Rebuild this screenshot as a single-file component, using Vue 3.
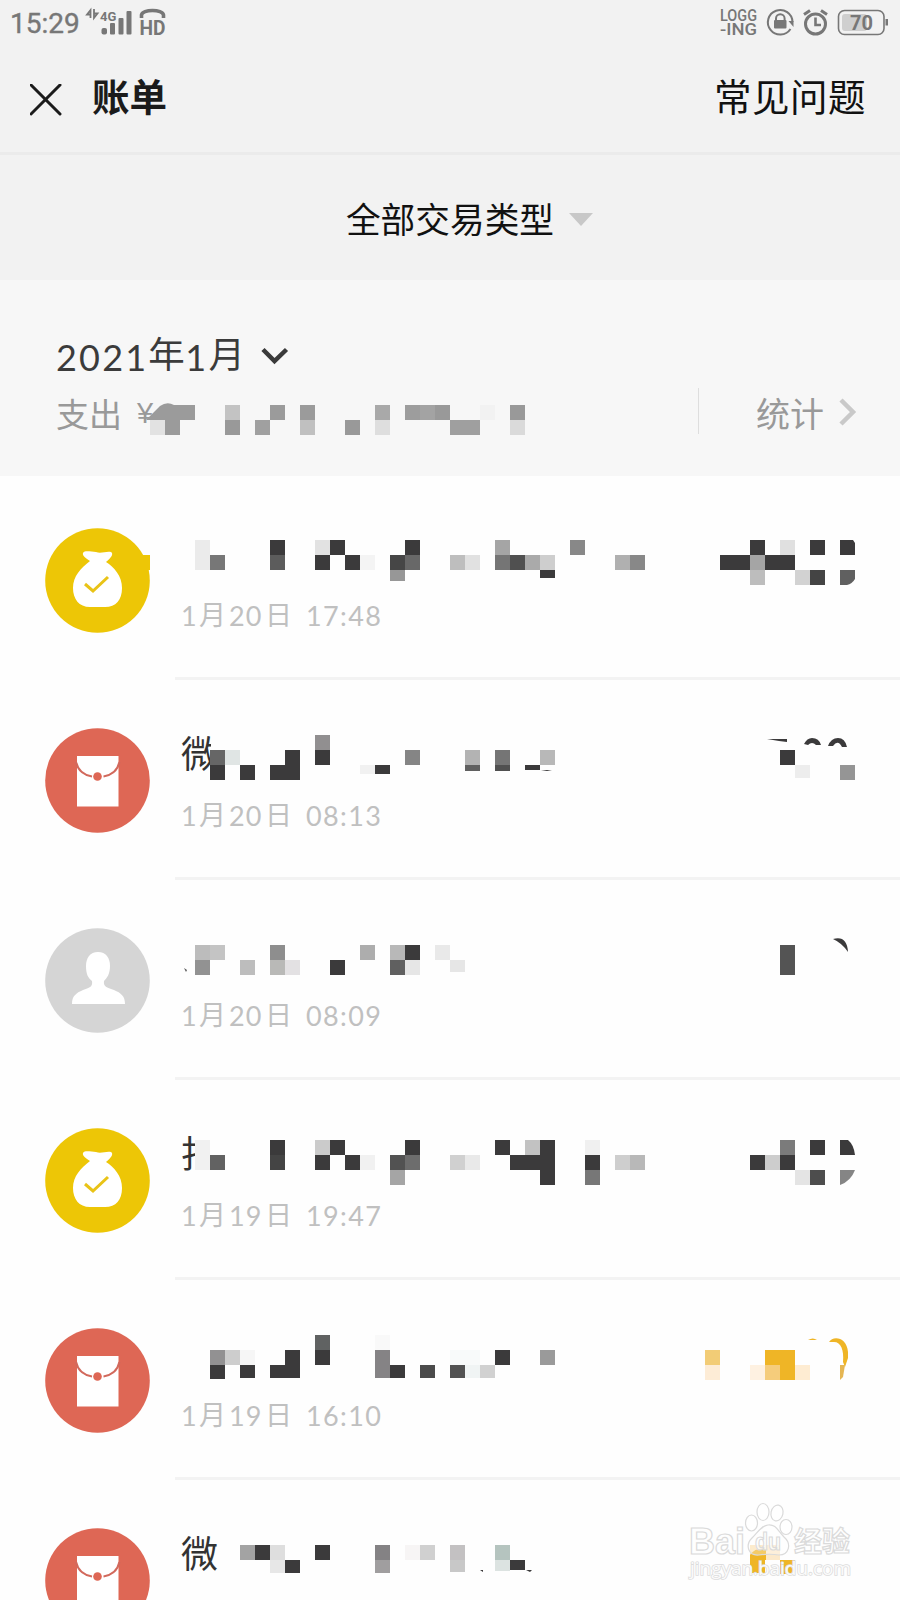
<template>
  <div class="page">
    <header class="status">
      <div class="status-left">
        <span class="clock">15:29</span>
        <svg width="86" height="44" viewBox="84 0 86 44">
          <g fill="none" stroke="#777" stroke-width="1.8">
            <path d="M90.500 18V10L87 14.500H90.500M94 9V18L97.500 13.500H94" />
            <path d="M141.500 18V15C142 9 163 9 163.500 15V18" stroke-width="3.600" />
          </g>
          <text x="100" y="20.500" class="net">4G</text>
          <g fill="#777">
            <rect x="101.500" y="28" width="5.500" height="6.500" rx="2" />
            <rect x="110" y="23" width="5" height="11.500" rx="1" />
            <rect x="118.500" y="18" width="5" height="16.500" rx="1" />
            <rect x="126.500" y="11" width="5" height="23.500" rx="1" />
          </g>
          <text x="139.500" y="35" class="hd" textLength="26" lengthAdjust="spacingAndGlyphs">HD</text>
        </svg>
      </div>
      <svg width="172" height="44" viewBox="718 0 172 44">
        <text x="720" y="21" class="log" textLength="37" lengthAdjust="spacingAndGlyphs">LOGG</text>
        <text x="720" y="34.500" class="log" textLength="37" lengthAdjust="spacingAndGlyphs">-ING</text>
        <g fill="none" stroke="#777" stroke-width="2">
          <path d="M790.500 29A12.300 12.300 0 1 1 792.500 22" />
          <path d="M776 21V18.500a4.300 4.300 0 0 1 8.600 0V21" />
        </g>
        <rect x="774" y="20" width="12.500" height="8.500" rx="1" fill="#777" />
        <path d="M788.500 21h5v6z" fill="#777" />
        <g fill="none" stroke="#777" stroke-width="3">
          <circle cx="815.500" cy="24" r="10" />
          <path d="M815.500 17.500V25H821" stroke-width="2.600" />
          <path d="M804 14.500L810 10.500M821 10.500L827 14.500" />
        </g>
        <rect x="838.500" y="10.500" width="45.500" height="24" rx="6" fill="none" stroke="#777" stroke-width="1.600" />
        <rect x="842" y="14" width="25" height="17" rx="3" fill="#cfcfcf" />
        <rect x="885.500" y="19" width="2.500" height="6.500" fill="#777" />
        <text x="850" y="30" class="battery" textLength="23">70</text>
      </svg>
    </header>

    <nav class="nav">
      <svg width="32" height="32" viewBox="0 0 32 32">
        <path d="M1 1L30 30M30 1L1 30" stroke="#1b1b1b" stroke-width="3" stroke-linecap="round" />
      </svg>
      <h1>账单</h1>
      <a class="faq">常见问题</a>
    </nav>

    <div class="filter">
      <span>全部交易类型</span>
      <i class="triangle"></i>
    </div>

    <section class="summary">
      <div class="month">
        <span class="num">2021</span><span class="cn">年</span><span class="num">1</span><span class="cn">月</span>
        <svg width="28" height="18" viewBox="0 0 28 18">
          <path d="M2 2.500L13.500 14L25.500 2.500" fill="none" stroke="#3a3a3a" stroke-width="4.500" />
        </svg>
      </div>
      <div class="spend">
        <span class="spend-label">支出</span><span class="yen">¥</span>
        <div class="stat">
          <span>统计</span>
          <svg width="18" height="30" viewBox="0 0 18 30">
            <path d="M2 3L14 15L2 27" fill="none" stroke="#c9c9c9" stroke-width="4.500" />
          </svg>
        </div>
      </div>
      <svg class="mosaic" width="900" height="196" viewBox="0 280 900 196" shape-rendering="crispEdges">
        <path d="M146 420L160 406Q167 401 174 405H180V420Z" fill="#9b9b9b" shape-rendering="auto" />
        <rect v-for="(b, i) in spendBlocks" :key="i" :x="b[0] * 15" :y="b[1] * 15" :width="(b[3] || 1) * 15" :height="b[4] || 15" :fill="b[2]" />
      </svg>
    </section>

    <main>
      <article v-for="(item, n) in items" :key="n" class="item">
        <svg class="icon" width="105" height="105" viewBox="0 0 105 105">
          <circle cx="52.500" cy="52.500" r="52.300" :fill="colors[item.type]" />
          <template v-if="item.type === 'bag'">
            <path d="M45 33C41 30 37 28 38 25C40 22 46 24 51 24C56 26 61 23 66 24C69 26 66 30 61 34C69 39 77 48 77 60C77 72 71 79 60 79H45C34 79 28 71 28 60C28 48 36 40 45 33Z" fill="#fff" />
            <path d="M40 56L48 63L63 49" fill="none" stroke="#e9c316" stroke-width="3" />
          </template>
          <template v-else-if="item.type === 'packet'">
            <path d="M32 28H73.500V78.500H32Z" fill="#fff" />
            <path d="M31 34C33 43 40 47.500 47 48.500M74.500 34C72.500 43 65.500 47.500 58.500 48.500" fill="none" stroke="#d2695c" stroke-width="2.200" />
            <circle cx="52.500" cy="48.500" r="4.300" fill="#de6755" />
          </template>
          <path v-else d="M53 24C61 24 65 30 65 38C65 46 62 50 59 53C58 59 63 60 69 62C76 65 80 68 80 76H27C27 68 31 65 38 62C44 60 48 59 47 53C43 50 41 46 41 38C41 30 45 24 53 24Z" fill="#fff" />
        </svg>
        <div class="body">
          <div class="name"><span :style="{ width: item.nameWidth + 'px' }">{{ item.name }}</span></div>
          <div v-if="item.time" class="time">
            <span class="num one">1</span><span class="cn">月</span><span class="num day">{{ item.day }}</span><span class="cn">日</span><span class="num clock-time">{{ item.time }}</span>
          </div>
        </div>
        <svg class="mosaic" width="900" height="200" :viewBox="`0 ${478 + n * 200} 900 200`">
          <g shape-rendering="crispEdges">
            <rect v-for="(b, i) in item.blocks" :key="i" :x="b[0] * 15" :y="b[1] * 15" :width="(b[3] || 1) * 15" :height="b[4] || 15" :fill="b[2]" />
          </g>
          <path v-for="(s, i) in item.shapes" :key="'s' + i" :d="s[0]" :fill="s[1]" />
        </svg>
      </article>
    </main>

    <svg class="watermark" width="170" height="90" viewBox="686 1500 170 90">
      <g fill="#fff" fill-opacity="0.7" stroke="#dadada" stroke-width="1.200">
        <text x="689" y="1554" class="wm-bai" textLength="56" lengthAdjust="spacingAndGlyphs">Bai</text>
        <ellipse cx="751.500" cy="1523" rx="6" ry="8" />
        <ellipse cx="763" cy="1512" rx="6" ry="8.500" />
        <ellipse cx="777" cy="1513" rx="6" ry="8" transform="rotate(12 777 1513)" />
        <ellipse cx="786" cy="1527" rx="6" ry="7.500" />
        <path d="M768 1525C776 1524 778 1531 784 1537C792 1544 789 1555 779 1555C773 1554 766 1554 759 1555C748 1556 745 1545 752 1538C758 1532 761 1526 768 1525Z" fill-opacity="0.3" />
        <text x="755" y="1550" class="wm-du" textLength="26" lengthAdjust="spacingAndGlyphs">du</text>
        <text x="794" y="1552" class="wm-cn">经验</text>
        <text x="690" y="1575" class="wm-url" textLength="161" lengthAdjust="spacingAndGlyphs">jingyan.baidu.com</text>
      </g>
    </svg>
  </div>
</template>

<script setup>
const colors = { bag: '#edc606', packet: '#de6755', person: '#d5d5d5' };
const D = '#3b3a3b';
const O = '#efb526';

// blocks: [column, row, colour, columns wide, height in px] on a 15px grid
const spendBlocks = [
  [12, 27, '#9b9b9b'], [10, 28, '#e2e2e2'], [11, 28, '#9b9b9b'],
  [15, 27, '#c3c3c3'], [15, 28, '#999'], [17, 28, '#a0a0a0'], [18, 27, '#9b9b9b'],
  [20, 27, '#9b9b9b'], [20, 28, '#c0c0c0'], [23, 28, '#999'], [25, 27, '#a9a9a9'], [25, 28, '#dedede'],
  [27, 27, '#9d9d9d'], [28, 27, '#a3a3a3'], [29, 27, '#999'], [30, 28, '#9f9f9f', 2],
  [32, 27, '#f2f2f2'], [34, 27, '#999'], [34, 28, '#dadada'],
];

const items = [
  {
    type: 'bag', name: '', nameWidth: 0, day: '20', time: '17:48',
    blocks: [
      [9, 37, '#edc606'],
      [13, 36, '#ebebeb', 1, 30], [14, 37, '#777'], [18, 36, D], [18, 37, '#5c5c5c'],
      [21, 36, '#e2e2e2'], [22, 36, D], [21, 37, D], [23, 37, D], [24, 37, '#f4f4f4'],
      [26, 37, '#464646'], [26, 38, '#979797', 1, 11], [27, 36, D], [27, 37, '#686868'],
      [30, 37, '#bebebe'], [31, 37, '#e1e1e1'], [33, 36, '#a5a5a5'], [33, 37, '#757575'],
      [34, 37, '#505050'], [35, 37, '#aaa'], [36, 37, '#cecece'], [36, 38, D, 1, 8],
      [38, 36, '#888'], [41, 37, '#b0b0b0'], [42, 37, '#888'],
      [48, 37, D, 2], [50, 36, D], [50, 37, '#a5a5a5'], [50, 38, '#bdbdbd'], [51, 37, D, 2],
      [52, 36, '#e0e0e0'], [53, 38, '#d2d2d2'], [54, 36, D], [54, 38, '#444'],
    ],
    shapes: [
      ['M840 540H853L855 543V555H840Z', D],
      ['M840 570H855V579Q852 584 847 585H840Z', '#606060'],
    ],
  },
  {
    type: 'packet', name: '微', nameWidth: 30, day: '20', time: '08:13',
    blocks: [
      [14, 50, '#666'], [14, 51, D], [15, 50, '#e0e5e4'], [16, 51, D], [18, 51, D, 2], [19, 50, D],
      [21, 49, '#918f90'], [21, 50, D], [24, 51, '#f1f1f1', 1, 9], [25, 51, D, 1, 9],
      [27, 50, '#858585'], [31, 50, '#b3b3b3'], [31, 51, '#606060', 1, 6],
      [33, 50, '#757575'], [33, 51, '#505050', 1, 6], [35, 51, D, 1, 5], [36, 50, '#b8b8b8'],
      [52, 50, D], [53, 51, '#ededed', 1, 13], [56, 51, '#959595'],
    ],
    shapes: [
      ['M767 739L787 739V742L779 741Z', D],
      ['M804 744Q807 738 812 738Q819 738 821 745L816 745Q812 741 808 745Z', D],
      ['M828 746Q831 738 838 738Q845 738 847 747L842 747Q838 739 833 746Z', D],
      ['M541 770L552 770L547 771Z', D],
    ],
  },
  {
    type: 'person', name: '', nameWidth: 0, day: '20', time: '08:09',
    blocks: [
      [13, 63, '#bcbcbc'], [14, 63, '#c4c4c4'], [13, 64, '#929292'], [16, 64, '#bdbdbd'],
      [18, 63, '#8e8e8e'], [18, 64, '#b9b9b7'], [19, 64, '#e3e1e3'], [22, 64, D],
      [24, 63, '#adadad'], [26, 63, '#b8b8b8'], [27, 63, D], [26, 64, '#606060'], [27, 64, '#e6e6e6'],
      [29, 63, '#e9e9e9'], [30, 64, '#e6e6e6', 1, 12], [52, 63, '#545454', 1, 30],
    ],
    shapes: [
      ['M184 968L187 970L186 972Z', '#555'],
      ['M833 939Q847 935 848 952Q842 943 833 939Z', D],
    ],
  },
  {
    type: 'bag', name: '扫', nameWidth: 14, day: '19', time: '19:47',
    blocks: [
      [13, 76, '#f1f1f1', 1, 30], [14, 77, '#626262'], [18, 76, D], [18, 77, '#444'],
      [21, 76, '#cbcbcb'], [22, 76, D], [21, 77, D], [23, 77, D], [24, 77, '#f1f1f1'],
      [26, 77, '#525252'], [26, 78, '#a5a5a5'], [27, 76, D], [27, 77, '#6d6d6d'],
      [30, 77, '#d0d0d0'], [31, 77, '#e9e9e9'], [33, 76, D], [35, 76, '#c2c2c2'], [34, 77, D, 2],
      [36, 76, D, 1, 45], [39, 76, '#f0f0f0'], [39, 77, D], [39, 78, '#777'],
      [41, 77, '#cecece'], [42, 77, '#b8b8b8'],
      [50, 77, D], [51, 77, '#cdcdcd'], [52, 76, '#7b7b7b'], [52, 77, D],
      [53, 78, '#e4e4e4'], [54, 76, D], [54, 78, '#4d4d4d'],
    ],
    shapes: [
      ['M840 1140H848Q854 1145 855 1155H840Z', D],
      ['M840 1170H855Q851 1181 840 1185Z', '#858585'],
    ],
  },
  {
    type: 'packet', name: '', nameWidth: 0, day: '19', time: '16:10',
    blocks: [
      [14, 90, '#929192'], [15, 90, '#cdcdcd'], [16, 90, '#f6f6f6'], [14, 91, D, 1, 14], [16, 91, D, 1, 13],
      [18, 91, D, 2, 13], [19, 90, D], [21, 89, '#606262'], [21, 90, D],
      [25, 89, '#f9f9f9'], [25, 90, '#858385', 1, 28], [26, 91, D, 1, 13], [28, 91, '#4b4b4b', 1, 13],
      [30, 90, '#f8fafa', 2], [30, 91, '#525252', 1, 13], [31, 91, '#f0f4f4', 1, 13], [32, 91, '#d1d1d1', 1, 13],
      [33, 90, D], [36, 90, '#9a9a9a'],
      [47, 90, '#f2cc76'], [47, 91, '#fdecd6'], [50, 91, '#fef1e1'], [51, 90, O, 2],
      [51, 91, '#f5cc7b'], [52, 91, O], [53, 91, '#feecd2'],
    ],
    shapes: [
      ['M808 1340Q813 1337 817 1340Z', O],
      ['M829 1342C833 1335 847 1337 848 1352V1358L845 1367L843 1362C844 1350 841 1342 834 1342Z', O],
      ['M840 1365H845L843 1377L840 1380Z', '#e5b653'],
    ],
  },
  {
    type: 'packet', name: '微', nameWidth: 38, day: '19', time: '',
    blocks: [
      [16, 103, '#a3a3a3'], [17, 103, D], [18, 103, '#dedede'], [18, 104, '#e7e7e7', 1, 13], [19, 104, D, 1, 13],
      [21, 103, D], [25, 103, '#848284'], [25, 104, '#a09e9f', 1, 13], [27, 103, '#f7f5f5'], [28, 103, '#d0d0d0'],
      [30, 103, '#c3c1c2'], [30, 104, '#c8c8c8', 1, 12], [33, 103, '#b5c4bf'], [33, 104, '#dce3e1', 1, 11], [34, 104, D, 1, 10],
      [50, 103, '#fbe3b6'], [50, 104, O, 1, 13], [51, 103, '#fce9cb'], [52, 104, O, 1, 14],
    ],
    shapes: [
      ['M480 1570H483V1572Z', D],
      ['M526 1570H532L530 1572Z', D],
      ['M750 1555Q756 1547 766 1549V1560H750Z', O],
    ],
  },
];
</script>

<style>
body {
  margin: 0;
  background: #fefefe;
}
</style>

<style scoped>
.page {
  position: relative;
  width: 900px;
  height: 1600px;
  overflow: hidden;
  background: #fefefe;
  font-family: "Liberation Sans", "Noto Sans CJK SC", sans-serif;
}
svg {
  display: block;
  flex: none;
}
.status {
  height: 44px;
  display: flex;
  justify-content: space-between;
  padding: 0 10px;
  background: #f2f2f2;
}
.status-left {
  display: flex;
  gap: 3px;
}
.clock {
  width: 71px;
  font: 28px/48px Roboto, sans-serif;
  -webkit-text-stroke: 0.4px #777;
  color: #777;
}
.net,
.hd,
.log,
.battery {
  font-family: Roboto, sans-serif;
  font-weight: 700;
  fill: #777;
}
.net {
  font-size: 13px;
}
.hd {
  font-size: 21px;
}
.log {
  font-size: 16.500px;
  font-weight: 500;
}
.battery {
  font-size: 20px;
}
.nav {
  box-sizing: border-box;
  height: 111px;
  display: flex;
  align-items: center;
  padding: 3px 34px 0 30px;
  background: #f2f2f2;
  border-bottom: 3px solid #ebebeb;
}
.nav h1 {
  margin: 0 0 3px 30px;
  font-size: 37.500px;
  line-height: 50px;
  font-weight: 700;
  color: #1b1b1b;
}
.faq {
  margin: 0 0 3px auto;
  font-size: 37.500px;
  line-height: 50px;
  letter-spacing: 0.5px;
  color: #111;
}
.filter {
  height: 125px;
  display: flex;
  align-items: center;
  justify-content: center;
  gap: 15px;
  padding-left: 39px;
  box-sizing: border-box;
  background: #f2f2f2;
  font-size: 34.700px;
  color: #111;
}
.triangle {
  margin-top: 3px;
  border: 12px solid transparent;
  border-top: 13px solid #c8c8c8;
  border-bottom: 0;
}
.summary {
  position: relative;
  height: 196px;
  box-sizing: border-box;
  padding: 50px 43px 0 56px;
  background: #f7f7f7;
}
.num {
  font-family: Lato, sans-serif;
}
.month {
  height: 52px;
  display: flex;
  align-items: center;
  color: #3b3b3b;
  font-size: 36px;
}
.month .num {
  padding-top: 2px;
  letter-spacing: 2.200px;
}
.month .cn {
  width: 37px;
  font-size: 36.500px;
  line-height: 50px;
}
.month svg {
  margin-left: 16px;
}
.spend {
  height: 48px;
  margin-top: 7px;
  display: flex;
  align-items: center;
  color: #999;
  font-size: 33px;
}
.spend-label {
  width: 81px;
}
.yen {
  font-size: 29px;
}
.stat {
  height: 46px;
  margin: -4px 0 0 auto;
  display: flex;
  align-items: center;
  gap: 15px;
  padding-left: 57px;
  border-left: 1px solid #dedede;
  font-size: 34px;
}
.stat span,
.stat svg {
  margin-top: 2px;
}
.mosaic {
  position: absolute;
  left: 0;
  top: 0;
}
main {
  padding-top: 2px;
}
.item {
  position: relative;
  height: 200px;
  display: flex;
  padding-left: 45px;
}
.icon {
  margin-top: 50px;
}
.body {
  box-sizing: border-box;
  height: 202px;
  flex: 1;
  margin-left: 25px;
  padding: 56px 0 0 6px;
  border-bottom: 3px solid #f3f3f3;
}
.name {
  height: 61px;
  font-size: 37px;
  line-height: 44px;
  color: #333;
}
.name span {
  display: block;
  overflow: hidden;
  white-space: nowrap;
}
.time {
  display: flex;
  align-items: center;
  height: 40px;
  font-size: 27px;
  color: #c0c0c0;
}
.time .cn {
  width: 27px;
  font-size: 27px;
  margin-top: -3px;
}
.time .num {
  letter-spacing: 1px;
}
.time .one {
  width: 18px;
}
.time .day {
  width: 36px;
  margin-left: 3px;
}
.time .clock-time {
  margin-left: 14px;
  letter-spacing: 1.400px;
}
.watermark {
  position: absolute;
  left: 686px;
  top: 1500px;
}
.wm-bai {
  font: 700 37px "Liberation Sans", sans-serif;
}
.wm-du {
  font: 700 24px "Liberation Sans", sans-serif;
}
.wm-cn {
  font: 700 28px "Noto Sans CJK SC", sans-serif;
}
.wm-url {
  font: 19px "Open Sans", sans-serif;
  fill-opacity: 0.9;
  stroke: #dcdcdc;
  stroke-width: 1.600px;
  paint-order: stroke;
}
</style>
